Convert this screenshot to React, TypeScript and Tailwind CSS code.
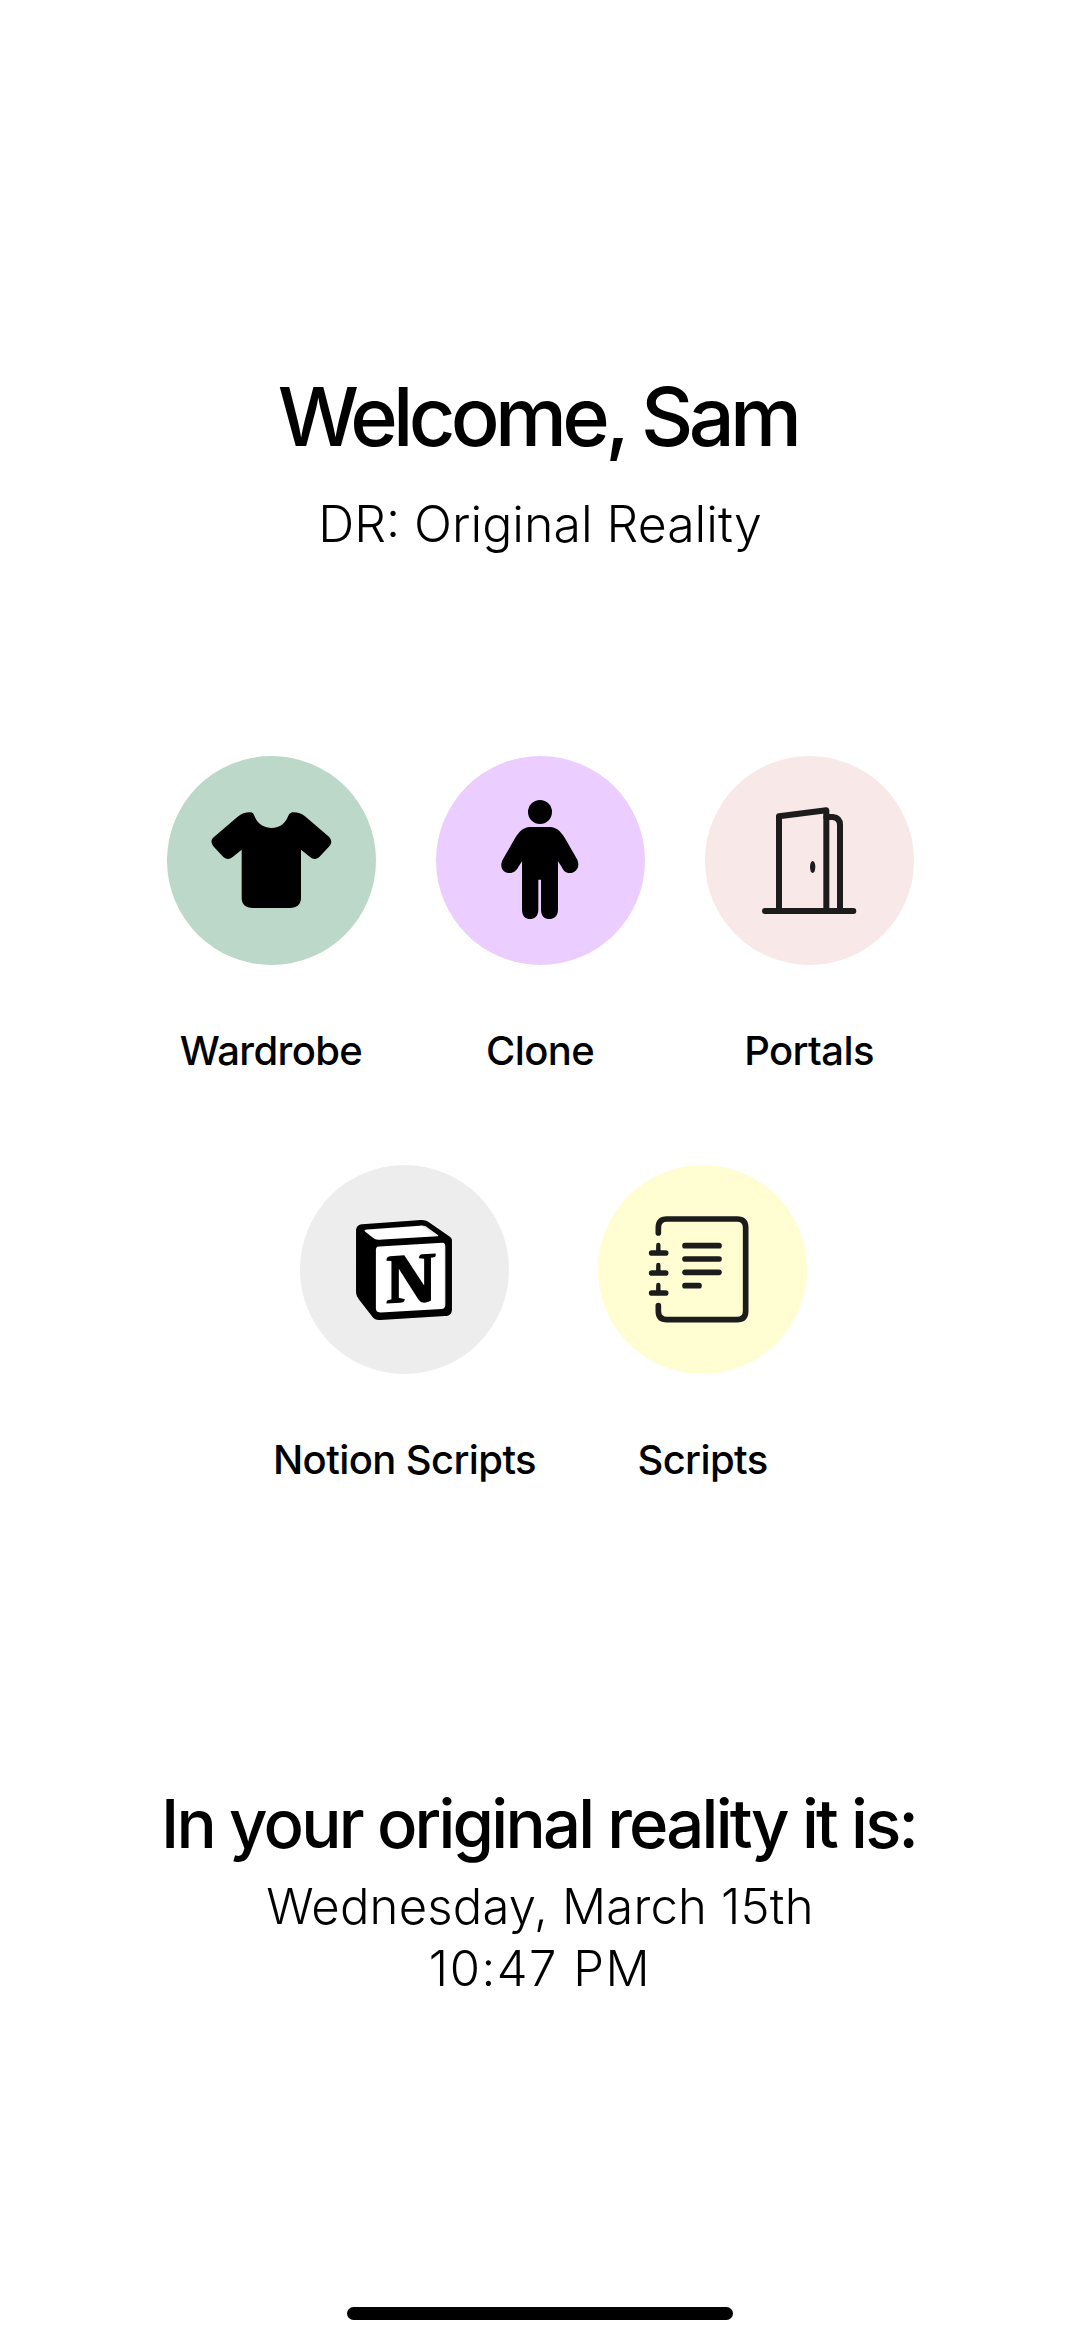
import type { ReactNode } from 'react'

function Shirt() {
  return (
    <svg viewBox="51 49 627 627" className="w-[209px] h-[209px]">
      <path d="M300 218C310 218 312 225 316 235C325 255 345 265 365 265C385 265 403 255 412 235C416 225 420 218 430 218C445 218 455 222 465 230L535 290C546 300 546 310 538 320L510 350C500 360 490 360 480 352L453 330V475C453 495 440 505 420 505H308C288 505 275 495 275 475V330L248 352C238 360 228 360 218 350L192 322C182 310 182 300 192 292L262 232C275 222 285 218 300 218Z" fill="#000" />
    </svg>
  )
}

function Person() {
  return (
    <svg viewBox="18 49 627 627" className="w-[209px] h-[209px]">
      <circle cx="330" cy="217" r="36" fill="#000" />
      <path d="M298 262H362C385 265 395 280 405 296L442 360C452 385 435 400 420 400C405 400 400 392 395 382L384 365V510C384 530 370 538 358 538C345 538 333 530 333 510V420H325V510C325 530 312 538 300 538C288 538 276 530 276 510V365L265 382C260 392 252 400 238 400C222 400 206 385 218 360L255 296C265 280 275 265 298 262Z" fill="#000" />
    </svg>
  )
}

function Door() {
  return (
    <svg viewBox="73 49 627 627" className="w-[209px] h-[209px]" fill="none" stroke="#1c1c1c" strokeWidth="18" strokeLinecap="round" strokeLinejoin="round">
      <path d="M295 510V230L437 212V510" />
      <path d="M437 232H456Q478 234 478 256V510" />
      <path d="M253 514H518" />
      <ellipse cx="396" cy="382" rx="8" ry="18" fill="#1c1c1c" stroke="none" />
    </svg>
  )
}

function NotionCube() {
  return (
    <svg viewBox="0 0 24 24" className="w-[100px] h-[100px]">
      <path d="M3 2.5L16 1.4L21.6 5.4V21.5L6 22.5L2 17.5Z" fill="#fff" />
      <path d="M4.459 4.208c.746.606 1.026.56 2.428.466l13.215-.793c.28 0 .047-.28-.046-.326L17.86 1.968c-.42-.326-.981-.7-2.055-.607L3.01 2.295c-.466.046-.56.28-.374.466zm.793 3.08v13.904c0 .747.373 1.027 1.214.98l14.523-.84c.841-.046.935-.56.935-1.167V6.354c0-.606-.233-.933-.748-.887l-15.177.887c-.56.047-.747.327-.747.933zm14.337.745c.093.42 0 .84-.42.888l-.7.14v10.264c-.608.327-1.168.514-1.635.514-.748 0-.935-.234-1.495-.933l-4.577-7.186v6.952L12.21 19s0 .84-1.168.84l-3.222.186c-.093-.186 0-.653.327-.746l.84-.233V9.854L7.822 9.76c-.094-.42.14-1.026.793-1.073l3.456-.233 4.764 7.279v-6.44l-1.215-.139c-.093-.514.28-.887.747-.933zM1.936 1.035l13.31-.98c1.634-.14 2.055-.047 3.082.7l4.249 2.986c.7.513.934.653.934 1.213v16.378c0 1.026-.373 1.634-1.68 1.726l-15.458.934c-.98.047-1.448-.093-1.962-.747l-3.129-4.06c-.56-.747-.793-1.306-.793-1.96V2.667c0-.839.374-1.54 1.447-1.632z" fill="#000" />
    </svg>
  )
}

function Notebook() {
  return (
    <svg viewBox="27 42 627 627" className="w-[209px] h-[209px]" fill="none" stroke="#1c1c1c" strokeWidth="17" strokeLinecap="round" strokeLinejoin="round">
      <path d="M208 246V230Q208 204 234 204H444Q470 204 470 230V480Q470 506 444 506H234Q208 506 208 480V464" />
      <path d="M288 284H390M288 324H390M288 364H390M288 404H330" />
      <path d="M188 306H230M188 366H230M188 426H230" />
      <path d="M208 282V306M208 342V366M208 402V426" strokeWidth="13" />
      <path d="M198 306Q204 298 204 284H212Q212 298 218 306ZM198 366Q204 358 204 344H212Q212 358 218 366ZM198 426Q204 418 204 404H212Q212 418 218 426Z" fill="#1c1c1c" stroke="none" />
    </svg>
  )
}

function Tile({ color, label, children }: { color: string; label: string; children: ReactNode }) {
  return (
    <div className="flex flex-col items-center">
      <div className={`w-[209px] h-[209px] rounded-full flex items-center justify-center ${color}`}>
        {children}
      </div>
      <span className="mt-[62px] text-[40px] leading-[48px] font-medium text-black tracking-[-0.6px] whitespace-nowrap">{label}</span>
    </div>
  )
}

export default function App() {
  return (
    <div className="w-[1080px] h-[2341px] bg-white flex flex-col items-center font-['Inter',sans-serif] text-black overflow-hidden">
      <h1 className="mt-[370px] pr-[5px] text-[81px] leading-[94px] font-medium tracking-[-4.7px]">Welcome, Sam</h1>
      <p className="mt-[30px] text-[50px] leading-[60px] font-light">DR: Original Reality</p>

      <div className="mt-[202px] flex gap-[60px]">
        <Tile color="bg-[#bcd8c9]" label="Wardrobe"><Shirt /></Tile>
        <Tile color="bg-[#eccdff]" label="Clone"><Person /></Tile>
        <Tile color="bg-[#f9e8e8]" label="Portals"><Door /></Tile>
      </div>

      <div className="mt-[90px] flex gap-[62px]">
        <Tile color="bg-[#ededed]" label="Notion Scripts"><NotionCube /></Tile>
        <Tile color="bg-[#fffdd1]" label="Scripts"><Notebook /></Tile>
      </div>

      <h2 className="mt-[300px] pr-[3px] text-[67px] leading-[80px] font-medium tracking-[-2.8px]">In your original reality it is:</h2>
      <p className="mt-[12px] text-[49px] leading-[62px] font-light text-center tracking-[0.2px]">
        Wednesday, March 15th
        <br />
        <span className="tracking-[1.5px]">10:47 PM</span>
      </p>

      <div className="mt-auto mb-[21px] w-[386px] h-[13px] rounded-full bg-black" />
    </div>
  )
}
